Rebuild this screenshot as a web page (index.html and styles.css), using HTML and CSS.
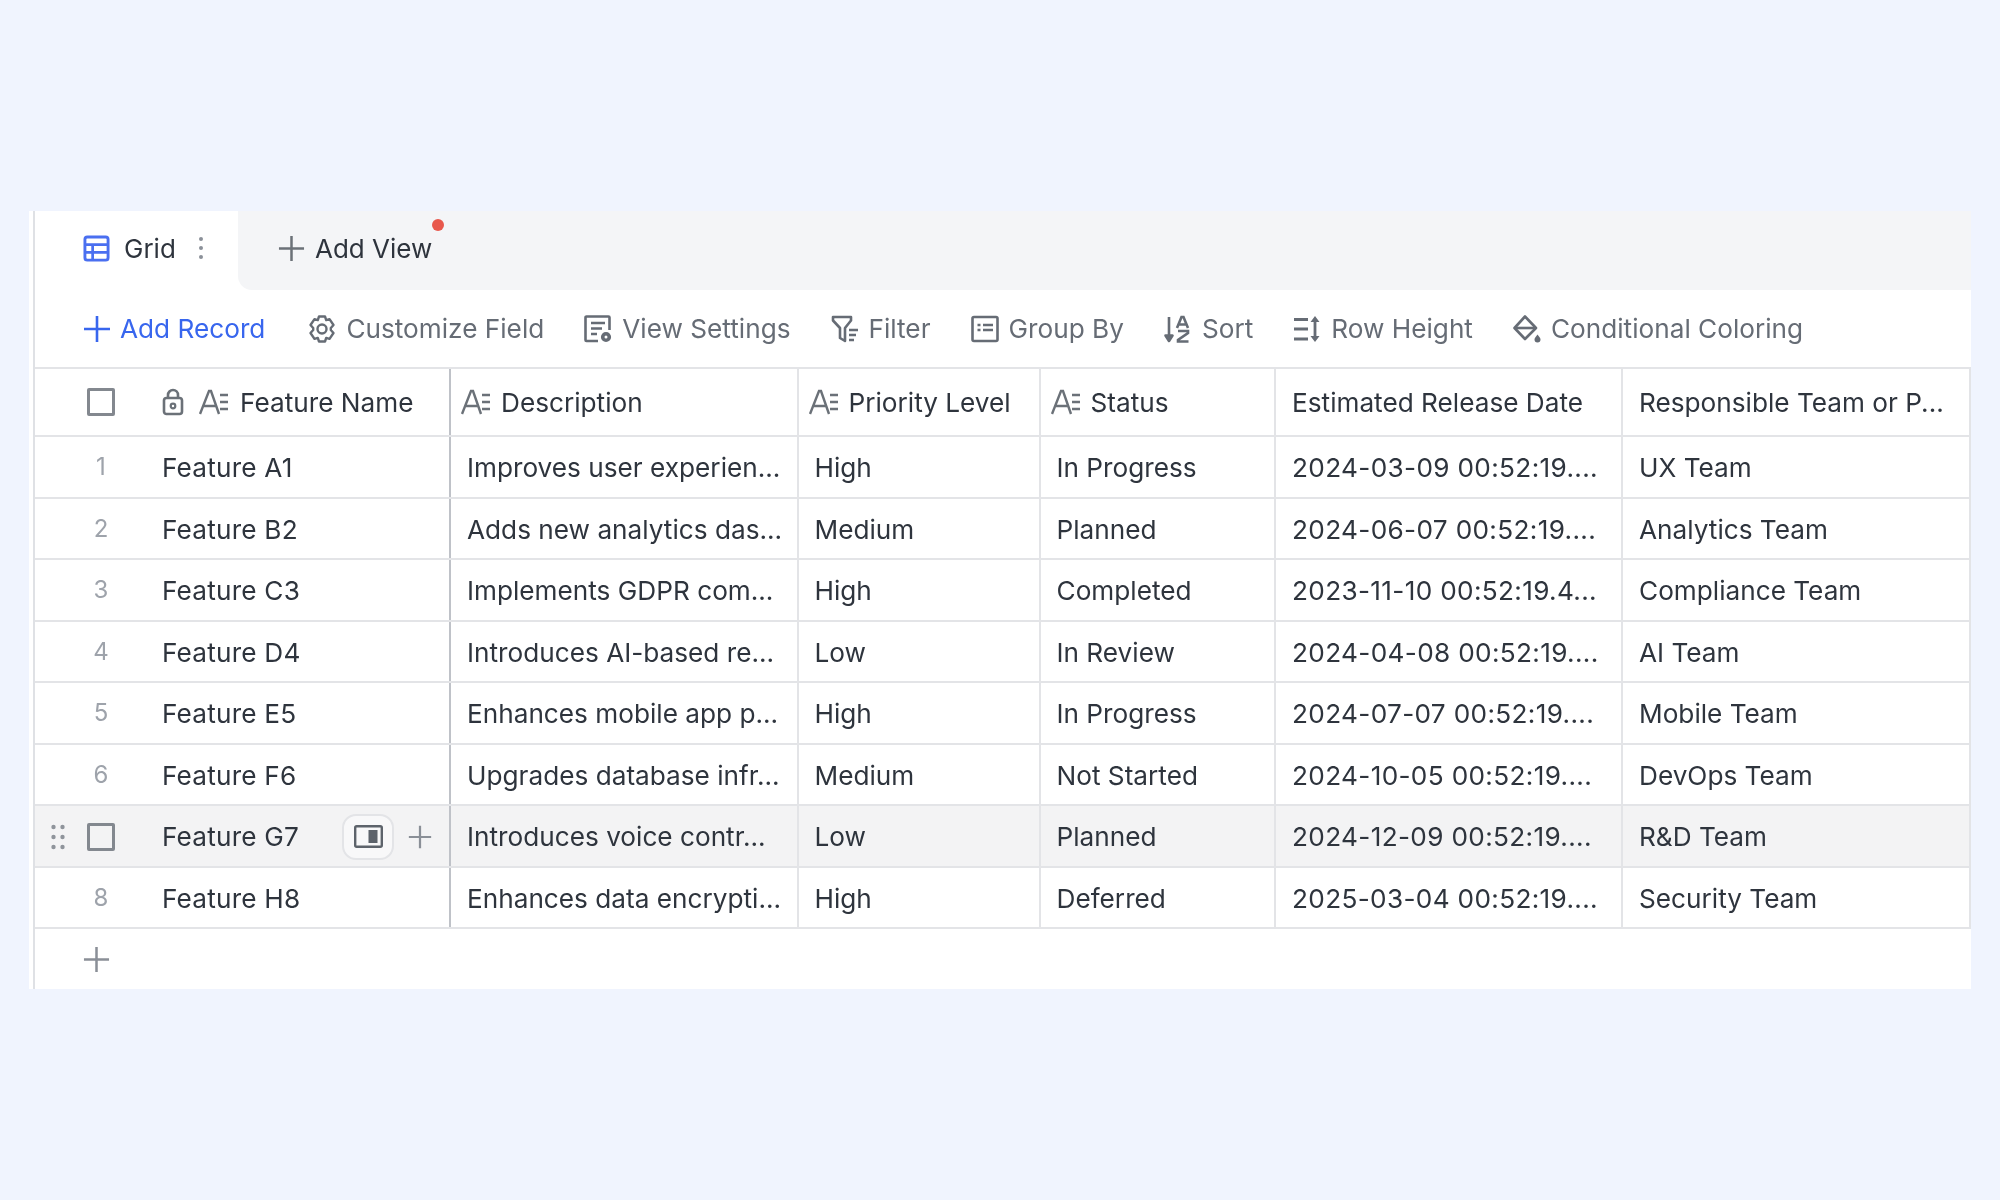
FILE: index.html
```html
<!DOCTYPE html>
<html lang="en">
<head>
<meta charset="utf-8">
<title>Grid</title>
<link rel="stylesheet" href="styles.css">
</head>
<body>
<svg class="defs" width="0" height="0" aria-hidden="true">
  <symbol id="i-plus" viewBox="0 0 28 28"><path d="M14 1v26M1 14h26" fill="none" stroke="currentColor" stroke-width="2.6"/></symbol>
  <symbol id="i-grid" viewBox="0 0 28 28"><rect x="2" y="2" width="24" height="24" rx="2.5" fill="none" stroke="currentColor" stroke-width="3"/><path d="M2 10h24M2 18h24M10 10v16" fill="none" stroke="currentColor" stroke-width="2.8"/></symbol>
  <symbol id="i-gear" viewBox="0 0 28 28"><path d="M11 1.500h6l1.200 3.600 3.300-1 4 5.900-2.700 3v2l2.700 3-4 5.900-3.300-1-1.200 3.600h-6l-1.200-3.600-3.300 1-4-5.900 2.700-3v-2l-2.700-3 4-5.900 3.300 1z" fill="none" stroke="currentColor" stroke-width="2.400" stroke-linejoin="round"/><circle cx="14" cy="14" r="4.500" fill="none" stroke="currentColor" stroke-width="2.400"/></symbol>
  <symbol id="i-settings" viewBox="0 0 28 28"><path d="M14 26H2.500a1 1 0 0 1-1-1V2.500a1 1 0 0 1 1-1h22a1 1 0 0 1 1 1V15" fill="none" stroke="currentColor" stroke-width="2.600"/><path d="M7 8h14M7 13.500h11M7 19h6" fill="none" stroke="currentColor" stroke-width="2.600"/><circle cx="22" cy="22" r="3.300" fill="none" stroke="currentColor" stroke-width="3.600"/></symbol>
  <symbol id="i-filter" viewBox="0 0 28 28"><path d="M2 2h18v3.500l-6 7.500v13l-5-3v-10L2 5.500z" fill="none" stroke="currentColor" stroke-width="2.600" stroke-linejoin="round"/><path d="M18 15h9M18 20h7M18 25h5" fill="none" stroke="currentColor" stroke-width="2.600"/></symbol>
  <symbol id="i-group" viewBox="0 0 28 28"><rect x="1.500" y="2" width="25" height="24" rx="1.500" fill="none" stroke="currentColor" stroke-width="2.600"/><path d="M6.500 10h3M12 10h10M6.500 15h3M12 15h10" fill="none" stroke="currentColor" stroke-width="2.600"/></symbol>
  <symbol id="i-sort" viewBox="0 0 28 28"><path d="M5 2v23M1.500 20.500 5 26l3.500-5.500z" fill="none" stroke="currentColor" stroke-width="2.600" stroke-linejoin="round"/><path d="M13 13 17.500 2h2L24 13M15 9.500h7M14 16h10v2l-10 7v1.500h10.500" fill="none" stroke="currentColor" stroke-width="2.600"/></symbol>
  <symbol id="i-height" viewBox="0 0 28 28"><path d="M1 4.500h14M1 14h14M1 24h14" fill="none" stroke="currentColor" stroke-width="2.800"/><path d="M22 4v20" fill="none" stroke="currentColor" stroke-width="2.800"/><path d="M22 1l4.500 6h-9zM22 27l4.500-6h-9z" fill="currentColor"/></symbol>
  <symbol id="i-paint" viewBox="0 0 28 28"><path d="M12 1.500 23 13 12 24 1.500 13z" fill="none" stroke="currentColor" stroke-width="2.600" stroke-linejoin="round"/><path d="M2 13h21" fill="none" stroke="currentColor" stroke-width="2.600"/><path d="M24.500 19.500c2 2.600 3 3.800 3 5a3 3 0 0 1-6 0c0-1.200 1-2.400 3-5z" fill="currentColor"/></symbol>
  <symbol id="i-lock" viewBox="0 0 22 28"><rect x="2" y="10" width="18" height="16" rx="2.500" fill="none" stroke="currentColor" stroke-width="2.600"/><path d="M6 10V7a5 5 0 0 1 10 0v3" fill="none" stroke="currentColor" stroke-width="2.600"/><circle cx="11" cy="18" r="2.300" fill="none" stroke="currentColor" stroke-width="2.200"/></symbol>
  <symbol id="i-text" viewBox="0 0 30 26"><path d="M1 25 10 2h2l8 23M5 17h12" fill="none" stroke="currentColor" stroke-width="2.400"/><path d="M21 6h8M21 13h8M21 20h8" fill="none" stroke="currentColor" stroke-width="2.400"/></symbol>
  <symbol id="i-panel" viewBox="0 0 29 23"><rect x="1.200" y="1.200" width="26.600" height="20.600" rx="1.500" fill="none" stroke="currentColor" stroke-width="2.400"/><rect x="14.500" y="5" width="9" height="13" fill="currentColor"/></symbol>
  <symbol id="i-drag" viewBox="0 0 14 26"><g fill="currentColor"><circle cx="2.500" cy="3" r="2.200"/><circle cx="11.500" cy="3" r="2.200"/><circle cx="2.500" cy="13" r="2.200"/><circle cx="11.500" cy="13" r="2.200"/><circle cx="2.500" cy="23" r="2.200"/><circle cx="11.500" cy="23" r="2.200"/></g></symbol>
</svg>

<main class="card">
  <nav class="tabs">
    <div class="tab-active">
      <svg class="ic-tab"><use href="#i-grid"/></svg>
      <span class="tab-label">Grid</span>
      <span class="tab-menu"><i></i><i></i><i></i></span>
    </div>
    <div class="tab-rest">
      <div class="add-view">
        <svg class="ic-add"><use href="#i-plus"/></svg>
        <span>Add View</span>
        <span class="red-dot"></span>
      </div>
    </div>
  </nav>

  <div class="toolbar">
    <div class="tool tool-primary"><svg class="ic-tool"><use href="#i-plus"/></svg><span>Add Record</span></div>
    <div class="tool"><svg class="ic-tool"><use href="#i-gear"/></svg><span>Customize Field</span></div>
    <div class="tool"><svg class="ic-tool"><use href="#i-settings"/></svg><span>View Settings</span></div>
    <div class="tool"><svg class="ic-tool"><use href="#i-filter"/></svg><span>Filter</span></div>
    <div class="tool"><svg class="ic-tool"><use href="#i-group"/></svg><span>Group By</span></div>
    <div class="tool"><svg class="ic-tool"><use href="#i-sort"/></svg><span>Sort</span></div>
    <div class="tool"><svg class="ic-tool"><use href="#i-height"/></svg><span>Row Height</span></div>
    <div class="tool"><svg class="ic-tool"><use href="#i-paint"/></svg><span>Conditional Coloring</span></div>
  </div>

  <div class="table">
    <div class="row row-head">
      <div class="cell cell-first">
        <div class="gutter"><span class="box"></span></div>
        <svg class="ic-lock"><use href="#i-lock"/></svg>
        <svg class="ic-text"><use href="#i-text"/></svg>
        <span>Feature Name</span>
      </div>
      <div class="cell cell-icon"><svg class="ic-text"><use href="#i-text"/></svg><span>Description</span></div>
      <div class="cell cell-icon"><svg class="ic-text"><use href="#i-text"/></svg><span>Priority Level</span></div>
      <div class="cell cell-icon"><svg class="ic-text"><use href="#i-text"/></svg><span>Status</span></div>
      <div class="cell">Estimated Release Date</div>
      <div class="cell">Responsible Team or P...</div>
    </div>

    <div class="row">
      <div class="cell cell-first"><div class="gutter"><span class="num">1</span></div><span class="name">Feature A1</span></div>
      <div class="cell">Improves user experien...</div><div class="cell">High</div><div class="cell">In Progress</div><div class="cell date">2024-03-09 00:52:19....</div><div class="cell">UX Team</div>
    </div>
    <div class="row">
      <div class="cell cell-first"><div class="gutter"><span class="num">2</span></div><span class="name">Feature B2</span></div>
      <div class="cell">Adds new analytics das...</div><div class="cell">Medium</div><div class="cell">Planned</div><div class="cell date">2024-06-07 00:52:19....</div><div class="cell">Analytics Team</div>
    </div>
    <div class="row">
      <div class="cell cell-first"><div class="gutter"><span class="num">3</span></div><span class="name">Feature C3</span></div>
      <div class="cell">Implements GDPR com...</div><div class="cell">High</div><div class="cell">Completed</div><div class="cell date">2023-11-10 00:52:19.4...</div><div class="cell">Compliance Team</div>
    </div>
    <div class="row">
      <div class="cell cell-first"><div class="gutter"><span class="num">4</span></div><span class="name">Feature D4</span></div>
      <div class="cell">Introduces AI-based re...</div><div class="cell">Low</div><div class="cell">In Review</div><div class="cell date">2024-04-08 00:52:19....</div><div class="cell">AI Team</div>
    </div>
    <div class="row">
      <div class="cell cell-first"><div class="gutter"><span class="num">5</span></div><span class="name">Feature E5</span></div>
      <div class="cell">Enhances mobile app p...</div><div class="cell">High</div><div class="cell">In Progress</div><div class="cell date">2024-07-07 00:52:19....</div><div class="cell">Mobile Team</div>
    </div>
    <div class="row">
      <div class="cell cell-first"><div class="gutter"><span class="num">6</span></div><span class="name">Feature F6</span></div>
      <div class="cell">Upgrades database infr...</div><div class="cell">Medium</div><div class="cell">Not Started</div><div class="cell date">2024-10-05 00:52:19....</div><div class="cell">DevOps Team</div>
    </div>
    <div class="row row-hover">
      <div class="cell cell-first">
        <svg class="ic-drag"><use href="#i-drag"/></svg>
        <div class="gutter"><span class="box"></span></div>
        <span class="name">Feature G7</span>
        <span class="expand"><svg class="ic-panel"><use href="#i-panel"/></svg></span>
        <svg class="ic-rowplus"><use href="#i-plus"/></svg>
      </div>
      <div class="cell">Introduces voice contr...</div><div class="cell">Low</div><div class="cell">Planned</div><div class="cell date">2024-12-09 00:52:19....</div><div class="cell">R&amp;D Team</div>
    </div>
    <div class="row">
      <div class="cell cell-first"><div class="gutter"><span class="num">8</span></div><span class="name">Feature H8</span></div>
      <div class="cell">Enhances data encrypti...</div><div class="cell">High</div><div class="cell">Deferred</div><div class="cell date">2025-03-04 00:52:19....</div><div class="cell">Security Team</div>
    </div>
    <div class="add-row"><svg class="ic-addrow"><use href="#i-plus"/></svg></div>
  </div>
</main>
</body>
</html>
```
FILE: styles.css
```css
* { box-sizing: border-box; }
html, body { margin: 0; height: 100%; }
body {
  background: #f0f4fe;
  font-family: Inter, "Liberation Sans", sans-serif;
  font-size: 26.2px;
  color: #2e343d;
  padding: 211px 29px 0 29px;
  height: 1200px;
  overflow: hidden;
}
.defs { position: absolute; }
svg { display: block; flex: none; }

.card {
  width: 1942px;
  height: 778px;
  background: #fff;
  padding-left: 5px;
  position: relative;
  filter: blur(0.45px);
}
.card::before {
  content: "";
  position: absolute;
  left: 4px;
  top: 0;
  bottom: 0;
  width: 2px;
  background: #dfe1e5;
}

/* tabs */
.tabs { display: flex; height: 79px; font-size: 26px; }
.tab-active {
  width: 204px;
  display: flex;
  align-items: center;
  padding-left: 49px;
  padding-bottom: 5px;
  background: #fff;
}
.ic-tab { width: 27px; height: 27px; color: #4a6ff0; margin-right: 14px; }
.tab-label { width: 52px; }
.tab-menu { display: flex; flex-direction: column; gap: 5px; margin-left: 23px; }
.tab-menu i { width: 4px; height: 4px; border-radius: 50%; background: #8b9099; display: block; }
.tab-rest {
  flex: 1;
  background: #f4f5f7;
  border-bottom-left-radius: 14px;
  padding-left: 40px;
  padding-bottom: 4px;
  display: flex;
  align-items: center;
}
.add-view { display: flex; align-items: center; position: relative; }
.ic-add { width: 27px; height: 27px; color: #6b7178; margin-right: 10px; }
.red-dot {
  position: absolute;
  right: -12px;
  top: -14px;
  width: 12px;
  height: 12px;
  border-radius: 50%;
  background: #e8584c;
}

/* toolbar */
.toolbar {
  height: 78px;
  display: flex;
  align-items: center;
  gap: 40px;
  padding-left: 49px;
  padding-bottom: 1px;
  color: #666c75;
}
.tool { display: flex; align-items: center; gap: 10px; }
.tool-primary { color: #3866ee; gap: 9px; margin-right: 3px; }
.ic-tool { width: 28px; height: 28px; }

/* table */
.table { border-top: 2px solid #e3e4e7; margin-top: -1px; }
.row {
  display: grid;
  grid-template-columns: 417px 347.500px 242px 235.500px 347px 347.500px;
  height: 61.500px;
  border-bottom: 2px solid #e3e4e7;
}
.row-head { height: 68px; }
.row-hover { background: #f3f3f4; }
.cell {
  display: flex;
  align-items: center;
  padding-left: 16px;
  padding-top: 2px;
  white-space: nowrap;
  overflow: hidden;
  border-right: 2px solid #e3e4e7;
  min-width: 0;
}
.row-head .cell { padding-top: 0; }
.cell-first { padding-left: 0; border-right-color: #bfc2c8; position: relative; }
.cell-icon { padding-left: 10px; }
.cell-icon .ic-text { margin-right: 10px; }
.date { letter-spacing: 0.33px; }
.name { letter-spacing: 0.2px; }
.gutter { width: 128px; flex: none; padding-left: 53px; display: flex; }
.num { width: 28px; text-align: center; color: #9ea3ab; font-size: 24px; margin-top: -2px; }
.box {
  width: 28px;
  height: 28px;
  border: 3px solid #83888f;
  border-radius: 2px;
}
.ic-lock { width: 22px; height: 28px; color: #6b7178; margin-right: 15px; }
.ic-text { width: 30px; height: 26px; color: #6b7178; margin-right: 11px; }
.ic-drag {
  position: absolute;
  left: 17px;
  top: 18px;
  width: 14px;
  height: 26px;
  color: #8f949b;
}
.expand {
  margin-left: auto;
  width: 52px;
  height: 46px;
  border: 2px solid #e3e4e7;
  border-radius: 14px;
  background: #f8f8f9;
  display: flex;
  align-items: center;
  justify-content: center;
}
.ic-panel { width: 29px; height: 23px; color: #5d636b; }
.ic-rowplus { width: 24px; height: 24px; margin: 0 17px 0 14px; color: #8a8f97; }
.add-row { display: flex; align-items: center; height: 60px; padding-left: 49px; }
.ic-addrow { width: 27px; height: 27px; color: #8a8f97; }
```
